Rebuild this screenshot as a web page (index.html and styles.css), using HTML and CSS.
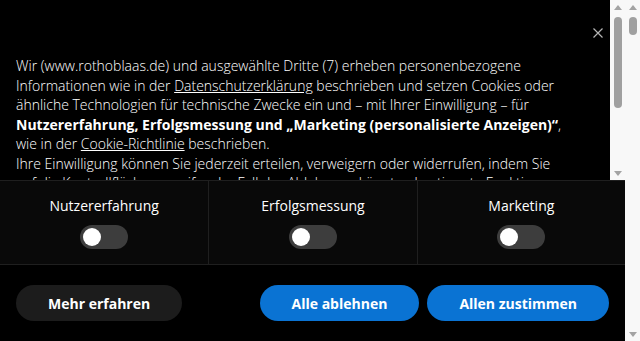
FILE: index.html
```html
<!DOCTYPE html>
<html lang="de">
<head>
    <meta charset="UTF-8">
    <meta name="viewport" content="width=device-width, initial-scale=1.0">
    <title>Cookie-Einstellungen</title>
    <link rel="stylesheet" href="styles.css">
</head>
<body>
    <div class="banner">
        <div class="notice">
            <div class="text">
                <button type="button" class="close" aria-label="Schließen">
                    <svg width="10" height="10" viewBox="0 0 10 10"><path d="M0.5 0.5L9.5 9.5M9.5 0.5L0.5 9.5" stroke="#b5b5b5" stroke-width="1.2"/></svg>
                </button>
                <p>
                    Wir (www.rothoblaas.de) und ausgewählte Dritte (7) erheben personenbezogene
                    Informationen wie in der <a href="#">Datenschutzerklärung</a> beschrieben und setzen Cookies oder
                    ähnliche Technologien für technische Zwecke ein und – mit Ihrer Einwilligung – für
                    <b>Nutzererfahrung, Erfolgsmessung und „Marketing (personalisierte Anzeigen)“</b>,
                    wie in der <a href="#">Cookie-Richtlinie</a> beschrieben.<br>
                    Ihre Einwilligung können Sie jederzeit erteilen, verweigern oder widerrufen, indem Sie
                    auf die Kontrollfläche zugreifen. Im Fall der Ablehnung könnten bestimmte Funktionen
                    nicht verfügbar sein.
                </p>
            </div>
            <div class="scrollbar inner">
                <span class="arrow up"></span>
                <span class="track"><span class="thumb"></span></span>
                <span class="arrow down"></span>
            </div>
        </div>
        <div class="switches">
            <div class="switch">
                <span>Nutzererfahrung</span>
                <label class="toggle"><input type="checkbox"><i></i></label>
            </div>
            <div class="switch">
                <span>Erfolgsmessung</span>
                <label class="toggle"><input type="checkbox"><i></i></label>
            </div>
            <div class="switch">
                <span>Marketing</span>
                <label class="toggle"><input type="checkbox"><i></i></label>
            </div>
        </div>
        <div class="actions">
            <button type="button" class="btn dark">Mehr erfahren</button>
            <div class="right">
                <button type="button" class="btn blue">Alle ablehnen</button>
                <button type="button" class="btn blue">Allen zustimmen</button>
            </div>
        </div>
    </div>
    <div class="scrollbar outer">
        <span class="arrow up"></span>
        <span class="track"><span class="thumb"></span></span>
        <span class="arrow down"></span>
    </div>
</body>
</html>
```

FILE: styles.css
```css
body {
    margin: 0;
    height: 341px;
    display: flex;
    overflow: hidden;
    font-family: "Open Sans", "Liberation Sans", sans-serif;
    background: #fff;
}
.banner {
    flex: 1;
    background: #000;
    color: #fff;
    display: flex;
    flex-direction: column;
}
.notice {
    height: 180px;
    display: flex;
    flex: none;
}
.text {
    flex: 1;
    position: relative;
    overflow: hidden;
}
.text p {
    margin: 0;
    padding: 56px 38px 0 16px;
    font-size: 14px;
    font-weight: 300;
    line-height: 19.5px;
}
.text b {
    font-weight: 700;
}
.text a {
    color: #fff;
}
.close {
    position: absolute;
    top: 27px;
    right: 6px;
    width: 12px;
    height: 12px;
    padding: 0;
    border: 0;
    background: none;
    display: flex;
    align-items: center;
    justify-content: center;
}

/* fake classic scrollbars */
.scrollbar {
    width: 15px;
    flex: none;
    background: #f8f8f8;
    display: flex;
    flex-direction: column;
    align-items: center;
}
.arrow {
    height: 14px;
    width: 15px;
    display: flex;
    align-items: center;
    justify-content: center;
    flex: none;
}
.arrow::before {
    content: "";
    border-left: 4px solid transparent;
    border-right: 4px solid transparent;
}
.up::before {
    border-bottom: 5px solid #a3a3a3;
}
.down::before {
    border-top: 5px solid #a3a3a3;
}
.track {
    flex: 1;
    width: 15px;
    padding-top: 3px;
    display: flex;
    justify-content: center;
}
.thumb {
    width: 8px;
    border-radius: 4px;
    background: #a0a0a0;
}
.inner .thumb {
    height: 91px;
}
.outer .thumb {
    height: 18px;
}

.switches {
    display: grid;
    grid-template-columns: 1fr 1fr 1fr;
    background: #090909;
    border-top: 1px solid #1f1f1f;
    border-bottom: 1px solid #1f1f1f;
}
.switch {
    display: flex;
    flex-direction: column;
    align-items: center;
    gap: 9px;
    padding: 15px 0 15px;
    font-size: 14px;
    line-height: 20px;
}
.switch + .switch {
    border-left: 1px solid #1f1f1f;
}
.toggle {
    display: block;
}
.toggle input {
    display: none;
}
.toggle i {
    display: block;
    width: 48px;
    height: 24px;
    border-radius: 12px;
    background: #3d3d3d;
    position: relative;
}
.toggle i::after {
    content: "";
    position: absolute;
    left: 3px;
    top: 3px;
    width: 18px;
    height: 18px;
    border-radius: 50%;
    background: #fff;
}
.actions {
    display: flex;
    justify-content: space-between;
    padding: 20px 16px;
}
.right {
    display: flex;
    gap: 8px;
}
.btn {
    height: 36px;
    padding: 0 32px;
    border: 0;
    border-radius: 18px;
    font-family: inherit;
    font-size: 14px;
    font-weight: 700;
    color: #fff;
}
.dark {
    background: #1c1c1c;
}
.blue {
    background: #0a73d3;
}
```
